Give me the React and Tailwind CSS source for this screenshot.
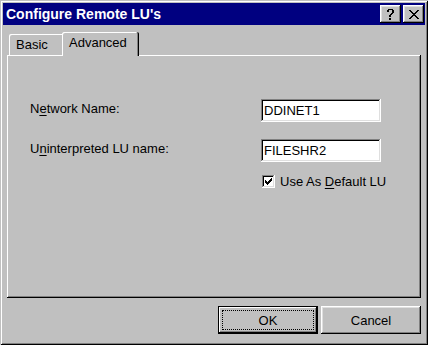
import React from "react";

function Pixels({ rows, className }) {
  const rects = [];
  rows.forEach((r, y) => {
    for (let x = 0; x < r.length; x++) {
      if (r[x] === "X") rects.push(<rect key={x + "-" + y} x={x} y={y} width="1" height="1" />);
    }
  });
  return (
    <svg
      width={rows[0].length}
      height={rows.length}
      viewBox={`0 0 ${rows[0].length} ${rows.length}`}
      shapeRendering="crispEdges"
      className={className}
      fill="#000"
    >
      {rects}
    </svg>
  );
}

const closeGlyph = [
  "XX......XX",
  ".XX....XX.",
  "..XX..XX..",
  "...XXXX...",
  "....XX....",
  "...XXXX...",
  "..XX..XX..",
  ".XX....XX.",
  "XX......XX",
];

const helpGlyph = [
  ".XXXXX.",
  "XX...XX",
  "XX...XX",
  ".....XX",
  "....XX.",
  "...XX..",
  "..XX...",
  "..XX...",
  ".......",
  "..XX...",
  "..XX...",
];

const checkGlyph = [
  "......X",
  ".....XX",
  "X...XXX",
  "XX.XXX.",
  "XXXXX..",
  ".XXX...",
  "..X....",
];

const raised =
  "shadow-[inset_-1px_-1px_#000,inset_1px_1px_#fff,inset_-2px_-2px_#808080,inset_2px_2px_#dfdfdf]";
const sunken =
  "shadow-[inset_-1px_-1px_#fff,inset_1px_1px_#808080,inset_-2px_-2px_#dfdfdf,inset_2px_2px_#000]";

export default function App() {
  return (
    <div className="w-[428px] h-[345px] bg-[#c0c0c0] shadow-[inset_1px_1px_#c0c0c0,inset_-1px_-1px_#000,inset_2px_2px_#fff,inset_-2px_-2px_#808080] p-[3px] flex flex-col font-['Liberation_Sans',Arial,sans-serif] text-[13px] leading-[15px] text-black select-none">
      {/* Title bar */}
      <div className="h-[22px] bg-[#000080] flex items-center pl-[3px] pr-[1px]">
        <div className="flex-1 text-white font-bold text-[14px] leading-[16px]">Configure Remote LU's</div>
        <div className="flex gap-[2px]">
          <div className={`w-[21px] h-[18px] bg-[#c0c0c0] ${raised} flex items-center justify-center`}>
            <Pixels rows={helpGlyph} />
          </div>
          <div className={`w-[21px] h-[18px] bg-[#c0c0c0] ${raised} flex items-center justify-center`}>
            <Pixels rows={closeGlyph} />
          </div>
        </div>
      </div>

      {/* Content */}
      <div className="flex-1 flex flex-col px-[4px] pt-[7px]">
        {/* Tabs */}
        <div className="flex items-end h-[23px] pl-[2px]">
          <div className="w-[53px] h-[21px] rounded-tl-[2px] shadow-[inset_1px_1px_#fff] pl-[7px] pt-[3px]">
            Basic
          </div>
          <div className="relative z-10 w-[77px] h-[24px] -mb-px bg-[#c0c0c0] rounded-tl-[2px] rounded-tr-[2px] shadow-[inset_-1px_0_#000,inset_1px_1px_#fff,inset_-2px_0_#808080] pl-[7px] pt-[3px]">
            Advanced
          </div>
        </div>

        {/* Panel */}
        <div className="h-[243px] shadow-[inset_-1px_-1px_#000,inset_1px_1px_#fff,inset_-2px_-2px_#808080] pl-[23px] pt-[44px] flex flex-col">
          <div className="flex items-start">
            <div className="w-[231px] mt-[2px]">
              N<span className="underline underline-offset-2">e</span>twork Name:
            </div>
            <div className={`w-[120px] h-[23px] bg-white ${sunken} pl-[3px] pt-[4px]`}>DDINET1</div>
          </div>
          <div className="flex items-start mt-[17px]">
            <div className="w-[231px] mt-[2px]">
              U<span className="underline underline-offset-2">n</span>interpreted LU name:
            </div>
            <div className={`w-[120px] h-[23px] bg-white ${sunken} pl-[3px] pt-[4px]`}>FILESHR2</div>
          </div>
          <div className="flex items-center mt-[12px] ml-[232px] gap-[5px]">
            <div className={`w-[13px] h-[13px] bg-white ${sunken} flex items-center justify-center`}>
              <Pixels rows={checkGlyph} />
            </div>
            <div>
              Use As <span className="underline underline-offset-2">D</span>efault LU
            </div>
          </div>
        </div>

        {/* Buttons */}
        <div className="flex justify-end gap-[3px] mt-[8px]">
          <div className="w-[100px] h-[28px] bg-[#c0c0c0] shadow-[inset_0_0_0_1px_#000,inset_-2px_-2px_#000,inset_2px_2px_#fff,inset_-3px_-3px_#808080] p-[4px]">
            <div className="w-full h-full border border-dotted border-black flex items-center justify-center">
              OK
            </div>
          </div>
          <div className={`w-[100px] h-[28px] bg-[#c0c0c0] ${raised} flex items-center justify-center`}>
            Cancel
          </div>
        </div>
      </div>
    </div>
  );
}
